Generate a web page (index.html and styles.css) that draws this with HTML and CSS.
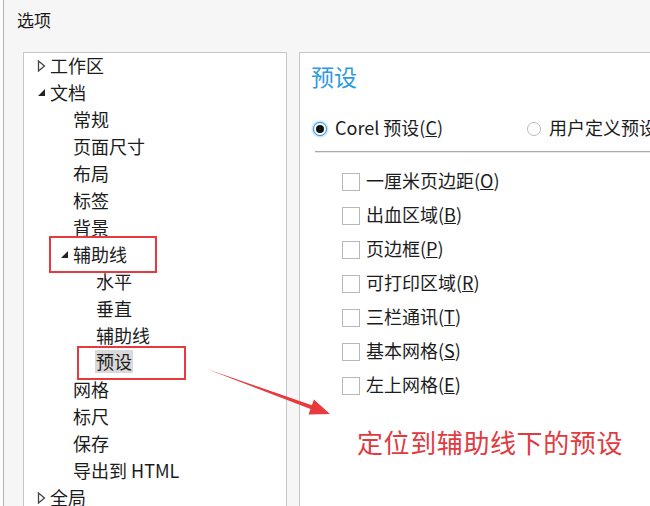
FILE: index.html
```html
<!DOCTYPE html>
<html lang="zh-CN">
<head>
    <meta charset="UTF-8">
    <title>选项</title>
    <link rel="stylesheet" href="styles.css">
</head>
<body>
    <div class="dialog">
        <div class="dialog-title">选项</div>

        <div class="dialog-body">
            <!-- category tree -->
            <div class="tree">
                <div class="row lv0"><span class="toggle"><svg width="9" height="12" viewBox="0 0 9 12"><polygon points="1.5,1 7.5,6 1.5,11" fill="#fff" stroke="#444" stroke-width="1.3"/></svg></span>工作区</div>
                <div class="row lv0"><span class="toggle"><svg width="10" height="10" viewBox="0 0 10 10"><polygon points="8,1 8,8 1,8" fill="#222"/></svg></span>文档</div>
                <div class="row lv1"><span class="toggle"></span>常规</div>
                <div class="row lv1"><span class="toggle"></span>页面尺寸</div>
                <div class="row lv1"><span class="toggle"></span>布局</div>
                <div class="row lv1"><span class="toggle"></span>标签</div>
                <div class="row lv1"><span class="toggle"></span>背景</div>
                <div class="row lv1 marked"><span class="toggle"><svg width="10" height="10" viewBox="0 0 10 10"><polygon points="8,1 8,8 1,8" fill="#222"/></svg></span>辅助线<span class="mark-box mark-guides"></span></div>
                <div class="row lv2"><span class="toggle"></span>水平</div>
                <div class="row lv2"><span class="toggle"></span>垂直</div>
                <div class="row lv2"><span class="toggle"></span>辅助线</div>
                <div class="row lv2 marked"><span class="toggle"></span><span class="selected">预设</span><span class="mark-box mark-preset"></span></div>
                <div class="row lv1"><span class="toggle"></span>网格</div>
                <div class="row lv1"><span class="toggle"></span>标尺</div>
                <div class="row lv1"><span class="toggle"></span>保存</div>
                <div class="row lv1"><span class="toggle"></span>导出到 HTML</div>
                <div class="row lv0"><span class="toggle"><svg width="9" height="12" viewBox="0 0 9 12"><polygon points="1.5,1 7.5,6 1.5,11" fill="#fff" stroke="#444" stroke-width="1.3"/></svg></span>全局</div>
            </div>

            <!-- settings page -->
            <div class="panel">
                <div class="panel-title">预设</div>

                <div class="radio-row">
                    <label class="radio-item"><span class="radio checked"></span>Corel 预设(<u>C</u>)</label>
                    <label class="radio-item user"><span class="radio"></span>用户定义预设</label>
                </div>

                <div class="separator"></div>

                <div class="checks">
                    <label class="check-item"><span class="box"></span>一厘米页边距(<u>O</u>)</label>
                    <label class="check-item"><span class="box"></span>出血区域(<u>B</u>)</label>
                    <label class="check-item"><span class="box"></span>页边框(<u>P</u>)</label>
                    <label class="check-item"><span class="box"></span>可打印区域(<u>R</u>)</label>
                    <label class="check-item"><span class="box"></span>三栏通讯(<u>T</u>)</label>
                    <label class="check-item"><span class="box"></span>基本网格(<u>S</u>)</label>
                    <label class="check-item"><span class="box"></span>左上网格(<u>E</u>)</label>
                </div>
            </div>
        </div>
    </div>

    <!-- tutorial annotation -->
    <svg class="arrow" width="650" height="506" viewBox="0 0 650 506">
        <polygon points="207,369 311.9,405.2 313.9,399.6 330,414 308.5,414.6 310.5,409" fill="#e8393c"/>
    </svg>
    <div class="note">定位到辅助线下的预设</div>
</body>
</html>
```

FILE: styles.css
```css
body {
    margin: 0;
    width: 650px;
    height: 506px;
    overflow: hidden;
    background: #fbfbfb;
    font-family: "Noto Sans CJK SC", "Noto Sans", sans-serif;
    color: #1c1c1c;
    position: relative;
}

.dialog {
    margin-left: 3px;
    height: 506px;
    border-left: 1px solid #b4b4b4;
    background: #f6f6f6;
}

.dialog-title {
    height: 52px;
    box-sizing: border-box;
    padding: 8px 0 0 13px;
    font-size: 17px;
    line-height: 24px;
}

.dialog-body {
    display: flex;
    padding-left: 19px;
}

.tree {
    width: 264px;
    height: 460px;
    box-sizing: border-box;
    border: 1px solid #c6c6c6;
    border-bottom: none;
    background: #fff;
    font-size: 18px;
}

.row {
    display: flex;
    align-items: center;
    height: 27px;
    box-sizing: border-box;
    padding-bottom: 4px;
    white-space: nowrap;
}

.row.lv0 { padding-left: 13px; }
.row.lv1 { padding-left: 36px; }
.row.lv2 { padding-left: 59px; }

.toggle {
    width: 13px;
    display: flex;
    align-items: center;
    padding-top: 3px;
}

.selected {
    background: #d9d9d9;
    padding: 0 1px;
    margin-left: -1px;
    line-height: 23px;
}

.marked {
    position: relative;
}

.mark-box {
    position: absolute;
    border: 2.5px solid #e63a3e;
    box-sizing: border-box;
}

.mark-guides {
    left: 25px;
    top: -6px;
    width: 108px;
    height: 37px;
}

.mark-preset {
    left: 53px;
    top: -4px;
    width: 109px;
    height: 34px;
}

.panel {
    flex: 1;
    margin-left: 12px;
    height: 460px;
    border-left: 1px solid #c6c6c6;
    border-top: 1px solid #c6c6c6;
    background: #fff;
    padding-left: 11px;
    font-size: 18px;
    white-space: nowrap;
    overflow: hidden;
}

.panel-title {
    padding-top: 8px;
    font-size: 23px;
    line-height: 30px;
    color: #2f9be0;
}

.radio-row {
    display: flex;
    align-items: center;
    margin-top: 24px;
    height: 24px;
}

.radio-item {
    display: flex;
    align-items: center;
}

.radio-item.user {
    margin-left: 82px;
}

.radio {
    width: 12px;
    height: 12px;
    border: 1px solid #b9b9b9;
    border-radius: 50%;
    background: #fff;
    margin: 4px 8px 0 2px;
    position: relative;
}

.radio.checked {
    border-color: #2f8fd8;
    box-shadow: 0 0 2px 1px #a7d6f5;
}

.radio.checked::after {
    content: "";
    position: absolute;
    left: 2px;
    top: 2px;
    width: 8px;
    height: 8px;
    border-radius: 50%;
    background: #111;
}

.separator {
    margin: 12px 0 0 4px;
    border-top: 1px solid #a9a9a9;
    border-bottom: 1px solid #e6e6e6;
}

.checks {
    display: flex;
    flex-direction: column;
    padding: 10px 0 0 31px;
}

.check-item {
    display: flex;
    align-items: center;
    height: 34px;
}

.box {
    width: 16px;
    height: 16px;
    border: 1px solid #b8b8b8;
    background: #fff;
    margin: 4px 6px 0 0;
}

.arrow {
    position: absolute;
    left: 0;
    top: 0;
}

.note {
    position: absolute;
    left: 357px;
    top: 424px;
    font-size: 26px;
    line-height: 36px;
    color: #e13a3f;
    letter-spacing: 0.6px;
}
```
